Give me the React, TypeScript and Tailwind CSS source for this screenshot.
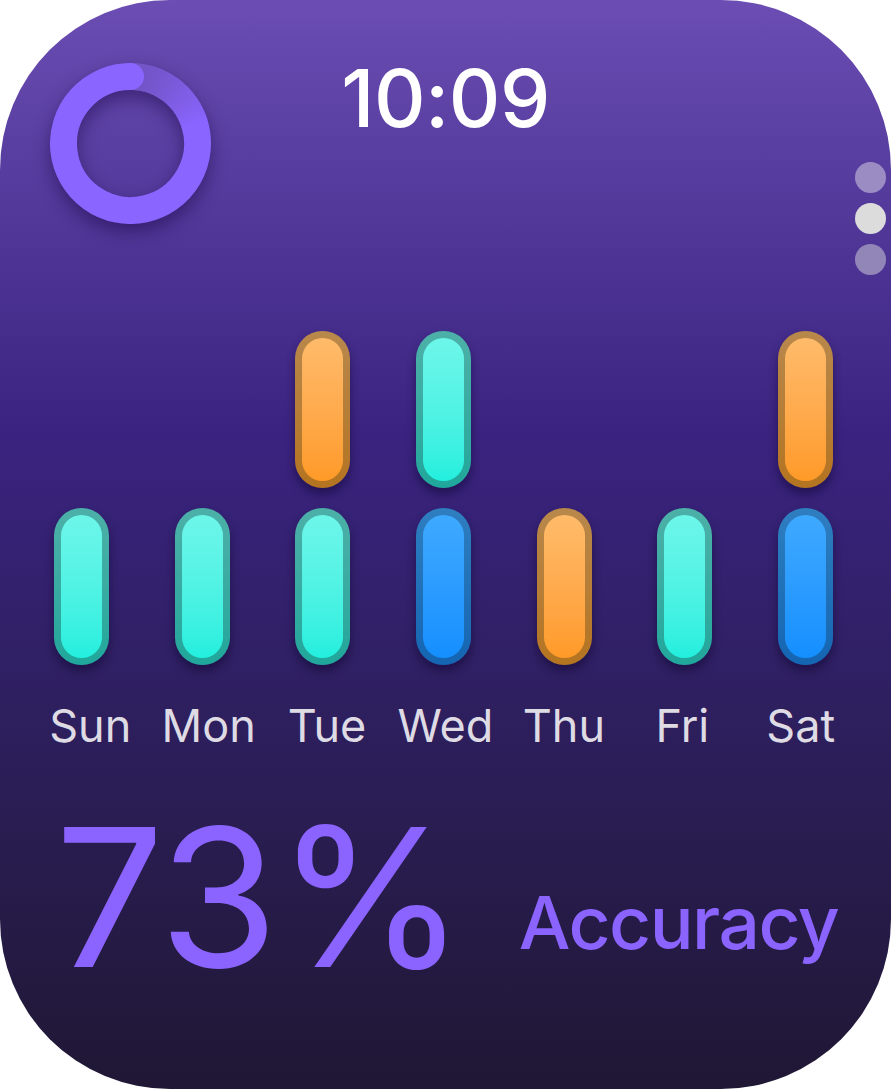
import React from "react";

type Kind = "teal" | "orange" | "blue" | null;

const PILL: Record<string, { outer: string; inner: string }> = {
  teal: {
    outer: "bg-linear-to-b from-[#4cb0a8] to-[#1fa79b]",
    inner: "bg-linear-to-b from-[#6df6ea] to-[#22efde]",
  },
  orange: {
    outer: "bg-linear-to-b from-[#b8884b] to-[#b4741f]",
    inner: "bg-linear-to-b from-[#ffbb6a] to-[#ff9a27]",
  },
  blue: {
    outer: "bg-linear-to-b from-[#2e7ec0] to-[#1465b2]",
    inner: "bg-linear-to-b from-[#3ea9ff] to-[#148fff]",
  },
};

function Pill({ kind }: { kind: Kind }) {
  if (!kind) return <div className="w-[55px] h-[157px]" />;
  const c = PILL[kind];
  return (
    <div
      className={`w-[55px] h-[157px] rounded-full p-[7px] shadow-[0_6px_10px_rgba(10,0,40,0.45)] ${c.outer}`}
    >
      <div className={`w-full h-full rounded-full ${c.inner}`} />
    </div>
  );
}

const top: Kind[] = [null, null, "orange", "teal", null, null, "orange"];
const bottom: Kind[] = ["teal", "teal", "teal", "blue", "orange", "teal", "blue"];
const days = ["Sun", "Mon", "Tue", "Wed", "Thu", "Fri", "Sat"];

function pt(cx: number, cy: number, r: number, deg: number) {
  const a = (deg * Math.PI) / 180;
  return [cx + r * Math.sin(a), cy - r * Math.cos(a)];
}

function arc(cx: number, cy: number, r: number, a0: number, a1: number) {
  const [x0, y0] = pt(cx, cy, r, a0);
  const [x1, y1] = pt(cx, cy, r, a1);
  const large = a1 - a0 > 180 ? 1 : 0;
  return `M ${x0} ${y0} A ${r} ${r} 0 ${large} 1 ${x1} ${y1}`;
}

function mix(a: number[], b: number[], t: number) {
  return `rgb(${a.map((v, i) => Math.round(v + (b[i] - v) * t)).join(",")})`;
}

function Ring() {
  const cx = 80.5;
  const cy = 80.5;
  const r = 67;
  const faded = [0x72, 0x54, 0xc4];
  const bright = [0x8b, 0x65, 0xff];
  const segs = [];
  const end = 72;
  for (let a = 0; a < end; a += 2) {
    const t = Math.pow(a / end, 1.4);
    segs.push(
      <path
        key={a}
        d={arc(cx, cy, r, a, Math.min(a + 3, end + 1))}
        stroke={mix(faded, bright, t)}
        strokeWidth={27}
        fill="none"
      />
    );
  }
  const [capx, capy] = pt(cx, cy, r, 0);
  return (
    <svg
      width={161}
      height={161}
      viewBox="0 0 161 161"
      className="drop-shadow-[0_8px_9px_rgba(20,0,60,0.45)]"
    >
      {segs}
      <path d={arc(cx, cy, r, end, 359.9)} stroke="#8b65ff" strokeWidth={27} fill="none" />
      <circle cx={capx} cy={capy} r={13.5} fill="#8b65ff" />
    </svg>
  );
}

export default function App() {
  return (
    <div
      className="w-[891px] h-[1089px] rounded-[170px] overflow-hidden bg-linear-to-b from-[#6b4db3] via-[#3a2380] via-40% to-[#1f1734] flex flex-col"
      style={{ fontFamily: "Inter, 'Noto Sans', sans-serif" }}
    >
      {/* header */}
      <div className="grid grid-cols-[1fr_auto_1fr] items-start">
        <div className="ml-[50px] mt-[63px]">
          <Ring />
        </div>
        <div className="mt-[58px] text-[80px] leading-none font-medium text-white tracking-[-0.5px]">
          10:09
        </div>
        <div className="flex flex-col items-end gap-[10px] mt-[162px] mr-[5px]">
          <div className="w-[31px] h-[31px] rounded-full bg-[#9c8cc4]" />
          <div className="w-[31px] h-[31px] rounded-full bg-[#dcdcdc]" />
          <div className="w-[31px] h-[31px] rounded-full bg-[#9286b9]" />
        </div>
      </div>

      {/* chart */}
      <div className="mt-[56px] ml-[21px] w-[845px] flex flex-col gap-[20px]">
        <div className="grid grid-cols-7 justify-items-center">
          {top.map((k, i) => (
            <Pill key={i} kind={k} />
          ))}
        </div>
        <div className="grid grid-cols-7 justify-items-center">
          {bottom.map((k, i) => (
            <Pill key={i} kind={k} />
          ))}
        </div>
      </div>

      <div className="mt-[38px] ml-[31px] w-[829px] grid grid-cols-7 text-center text-[45px] leading-none text-[#dedbe4]">
        {days.map((d) => (
          <div key={d}>{d}</div>
        ))}
      </div>

      {/* footer */}
      <div className="mt-[53px] ml-[55px] flex items-start text-[#8b64ff]">
        <div className="text-[193px] leading-none font-normal tracking-[-2px]">73%</div>
        <div className="ml-[55px] mt-[85px] text-[73px] leading-none font-medium tracking-[-1.5px]">Accuracy</div>
      </div>
    </div>
  );
}
